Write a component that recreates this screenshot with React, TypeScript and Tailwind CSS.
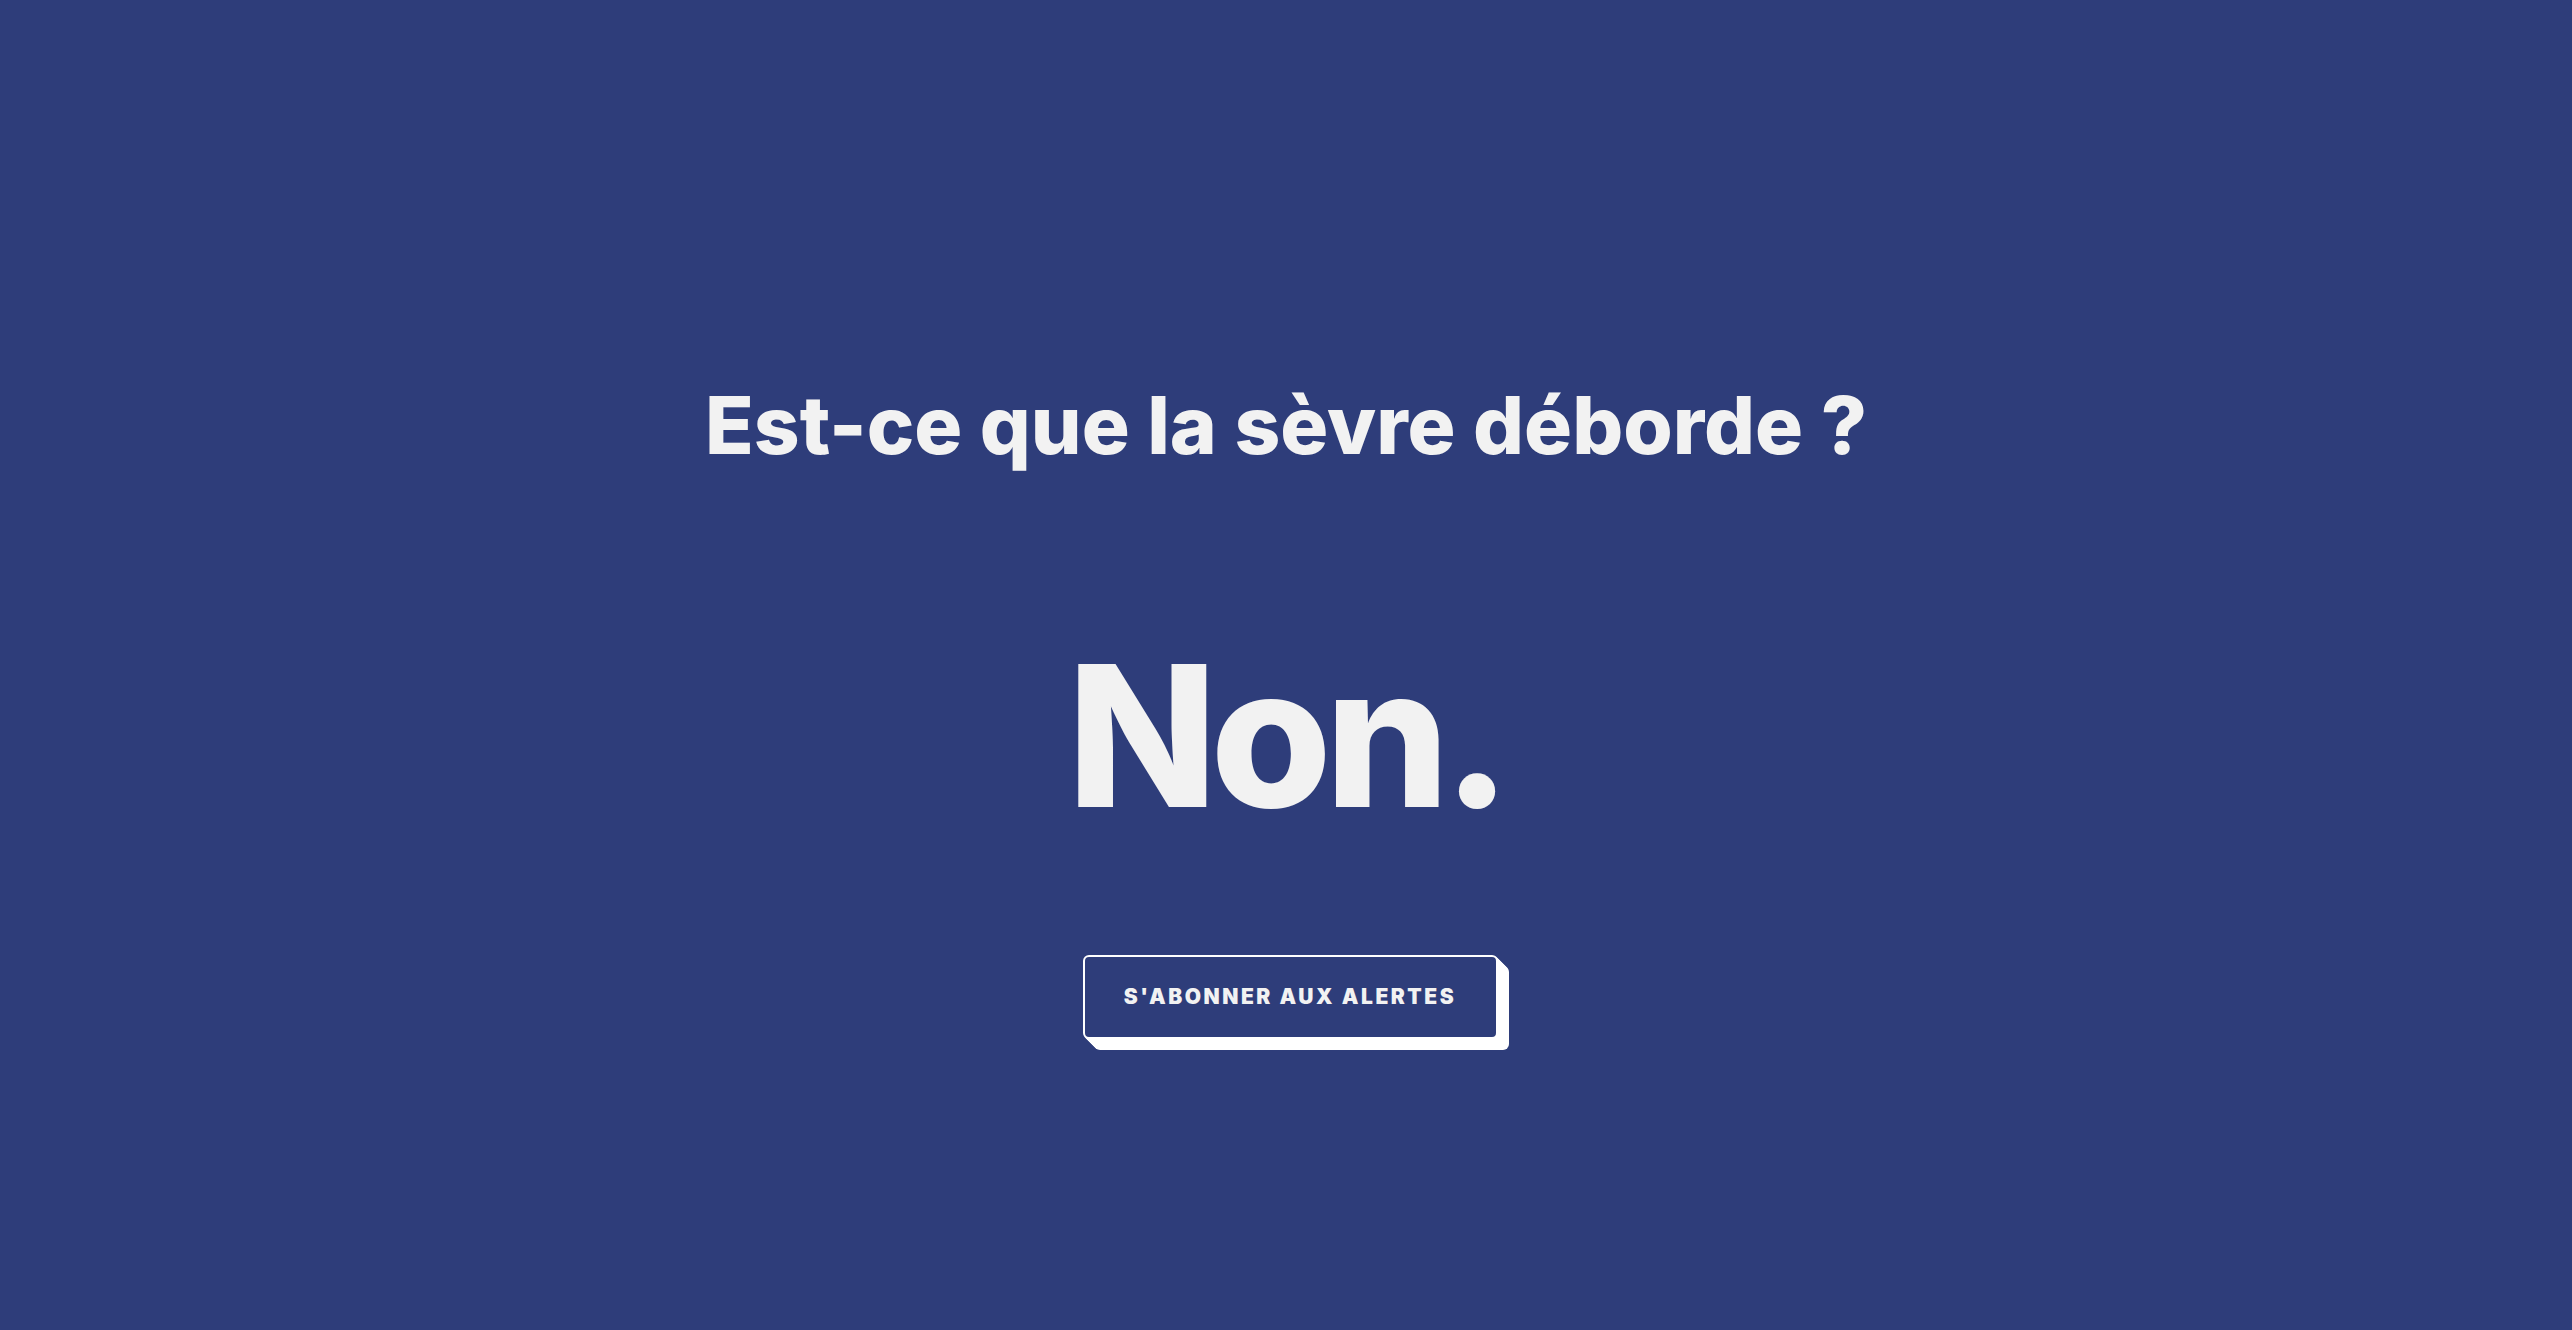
export default function App() {
  return (
    <div className="min-h-[1330px] w-full bg-[#2e3d7a] flex flex-col items-center text-[#f2f2f2] font-['Inter','Lato',sans-serif]">
      <h1 className="mt-[385px] text-[80px] leading-none font-extrabold tracking-[0em]">
        Est-ce que la sèvre déborde ?
      </h1>
      <div className="mt-[173px] text-[196px] leading-none font-extrabold tracking-[-0.035em]">Non.</div>
      <button className="mt-[121px] ml-[8px] w-[415px] h-[84px] rounded-[6px] border-2 border-white bg-[#2e3d7a] text-[21px] font-black tracking-[0.12em] text-[#f2f2f2] shadow-[1px_1px_0_#fff,2px_2px_0_#fff,3px_3px_0_#fff,4px_4px_0_#fff,5px_5px_0_#fff,6px_6px_0_#fff,7px_7px_0_#fff,8px_8px_0_#fff,9px_9px_0_#fff,10px_10px_0_#fff,11px_11px_0_#fff]">
        S'ABONNER AUX ALERTES
      </button>
    </div>
  );
}
